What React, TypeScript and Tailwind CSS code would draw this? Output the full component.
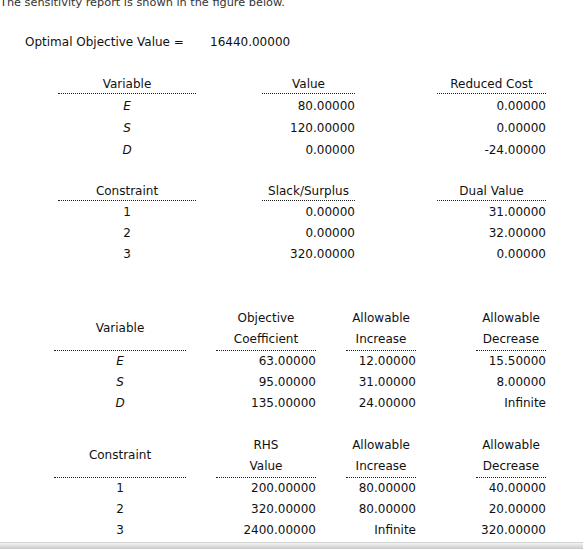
const dash = "border-b border-dotted border-[#222]";

// column classes for the first two tables
const a1 = "ml-[58px] w-[138px] text-center";
const a2 = "ml-[66px] w-[93px] text-right";
const a3 = "ml-[82px] w-[109px] text-right";

// column classes for the ranging tables
const b1 = "ml-[54px] w-[132px] text-center";
const b2 = "ml-[30px] w-[100px] text-right";
const b3 = "ml-[30px] w-[70px] text-right";
const b4 = "ml-[60px] w-[70px] text-right";

const solution = [
  ["E", "80.00000", "0.00000"],
  ["S", "120.00000", "0.00000"],
  ["D", "0.00000", "-24.00000"],
];

const slack = [
  ["1", "0.00000", "31.00000"],
  ["2", "0.00000", "32.00000"],
  ["3", "320.00000", "0.00000"],
];

const objRanging = [
  ["E", "63.00000", "12.00000", "15.50000"],
  ["S", "95.00000", "31.00000", "8.00000"],
  ["D", "135.00000", "24.00000", "Infinite"],
];

const rhsRanging = [
  ["1", "200.00000", "80.00000", "40.00000"],
  ["2", "320.00000", "80.00000", "20.00000"],
  ["3", "2400.00000", "Infinite", "320.00000"],
];

function SimpleTable({
  heads,
  rows,
  italic,
  rowH,
  className,
}: {
  heads: string[];
  rows: string[][];
  italic?: boolean;
  rowH: string;
  className: string;
}) {
  return (
    <div className={className}>
      <div className="flex h-[20px] leading-[20px]">
        <div className={`${a1} ${dash} text-center`}>{heads[0]}</div>
        <div className={`${a2} ${dash} !text-center`}>{heads[1]}</div>
        <div className={`${a3} ${dash} !text-center`}>{heads[2]}</div>
      </div>
      <div className="h-[1px]" />
      {rows.map((r) => (
        <div key={r[0]} className={`flex ${rowH}`}>
          <div className={`${a1} ${italic ? "italic" : ""}`}>{r[0]}</div>
          <div className={a2}>{r[1]}</div>
          <div className={a3}>{r[2]}</div>
        </div>
      ))}
    </div>
  );
}

function RangeTable({
  first,
  heads,
  rows,
  italic,
  className,
}: {
  first: string;
  heads: [string, string][];
  rows: string[][];
  italic?: boolean;
  className: string;
}) {
  return (
    <div className={className}>
      <div className="flex h-[43px] leading-[21px]">
        <div className={`${b1} ${dash} flex items-center justify-center pb-[1px]`}>{first}</div>
        <div className={`${b2} ${dash} !text-center`}>
          {heads[0][0]}
          <br />
          {heads[0][1]}
        </div>
        <div className={`${b3} ${dash} !text-center`}>
          {heads[1][0]}
          <br />
          {heads[1][1]}
        </div>
        <div className={`${b4} ${dash} !text-center`}>
          {heads[2][0]}
          <br />
          {heads[2][1]}
        </div>
      </div>
      {rows.map((r) => (
        <div key={r[0]} className="flex h-[21px] leading-[21px]">
          <div className={`${b1} ${italic ? "italic" : ""}`}>{r[0]}</div>
          <div className={b2}>{r[1]}</div>
          <div className={b3}>{r[2]}</div>
          <div className={b4}>{r[3]}</div>
        </div>
      ))}
    </div>
  );
}

export default function App() {
  return (
    <div className="w-[586px] h-[550px] overflow-hidden bg-white font-['DejaVu_Sans',sans-serif] text-[12px] text-[#111]">
      <p className="-mt-[4px] h-[14px] leading-[14px] text-[11.3px] text-[#333]">
        The sensitivity report is shown in the figure below.
      </p>

      <div className="mt-[24px] flex h-[16px] leading-[16px]">
        <span className="ml-[25px] w-[185px]">Optimal Objective Value =</span>
        <span>16440.00000</span>
      </div>

      <SimpleTable
        className="mt-[24px]"
        heads={["Variable", "Value", "Reduced Cost"]}
        rows={solution}
        italic
        rowH="h-[22px] leading-[22px]"
      />

      <SimpleTable
        className="mt-[20px]"
        heads={["Constraint", "Slack/Surplus", "Dual Value"]}
        rows={slack}
        rowH="h-[21px] leading-[21px]"
      />

      <RangeTable
        className="mt-[43px]"
        first="Variable"
        heads={[
          ["Objective", "Coefficient"],
          ["Allowable", "Increase"],
          ["Allowable", "Decrease"],
        ]}
        rows={objRanging}
        italic
      />

      <RangeTable
        className="mt-[21px]"
        first="Constraint"
        heads={[
          ["RHS", "Value"],
          ["Allowable", "Increase"],
          ["Allowable", "Decrease"],
        ]}
        rows={rhsRanging}
      />

      {/* bottom scroll shadow */}
      <div className="mt-[1px] h-[7px] w-[583px] border-t border-[#d4d4d4] bg-gradient-to-b from-[#f4f4f4] to-[#c9c9c9]" />
    </div>
  );
}
